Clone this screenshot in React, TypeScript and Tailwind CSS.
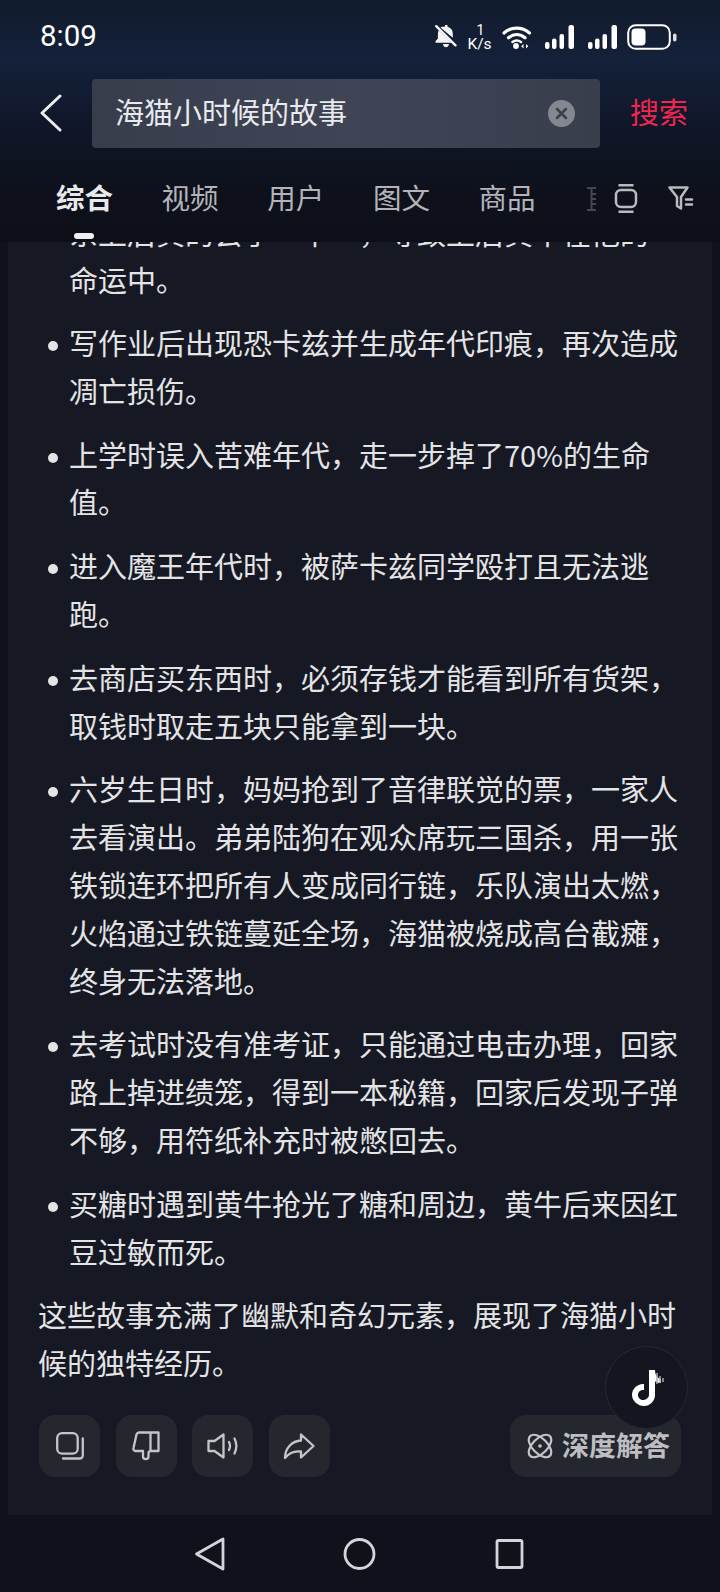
import { ReactNode } from "react";

const FONT = { fontFamily: '"Noto Sans CJK SC", Roboto, sans-serif' };

const BULLETS: string[][] = [
  ["写作业后出现恐卡兹并生成年代印痕，再次造成", "凋亡损伤。"],
  ["上学时误入苦难年代，走一步掉了70%的生命", "值。"],
  ["进入魔王年代时，被萨卡兹同学殴打且无法逃", "跑。"],
  ["去商店买东西时，必须存钱才能看到所有货架，", "取钱时取走五块只能拿到一块。"],
  [
    "六岁生日时，妈妈抢到了音律联觉的票，一家人",
    "去看演出。弟弟陆狗在观众席玩三国杀，用一张",
    "铁锁连环把所有人变成同行链，乐队演出太燃，",
    "火焰通过铁链蔓延全场，海猫被烧成高台截瘫，",
    "终身无法落地。",
  ],
  [
    "去考试时没有准考证，只能通过电击办理，回家",
    "路上掉进绩笼，得到一本秘籍，回家后发现子弹",
    "不够，用符纸补充时被憋回去。",
  ],
  ["买糖时遇到黄牛抢光了糖和周边，黄牛后来因红", "豆过敏而死。"],
];

const TABS = ["视频", "用户", "图文", "商品"];

function Line({ children }: { children: ReactNode }) {
  return <div className="h-[47.8px] whitespace-nowrap leading-[47.8px]">{children}</div>;
}

function ActionButton({ children }: { children: ReactNode }) {
  return (
    <div className="flex h-[62px] w-[61px] items-center justify-center rounded-[16px] bg-[#25272f]">
      {children}
    </div>
  );
}

function SignalBars() {
  return (
    <svg width="30" height="24" viewBox="0 0 30 24" fill="#fff">
      <rect x="0" y="17" width="4.500" height="7" rx="2" />
      <rect x="7" y="13.500" width="4.500" height="10.500" rx="2" />
      <rect x="14.500" y="9" width="4.500" height="15" rx="2" />
      <rect x="23.500" y="0" width="5.500" height="24" rx="2.200" />
    </svg>
  );
}

function StatusBar() {
  return (
    <div className="flex h-[72px] items-center justify-between pl-[40px] pr-[43px] pt-[1px]">
      <span className="text-[29.500px] leading-none text-white" style={{ fontFamily: "Roboto, sans-serif" }}>
        8:09
      </span>
      <div className="flex items-center text-white">
        <svg width="22" height="23" viewBox="0 0 22 23" fill="#f4f4f4" className="mr-[11px]">
          <path d="M10 0h2.500v1.800c3.400.7 5.300 3.400 5.300 7v4L5.500 2.600C6.500 2 8 1.800 10 1.600z" />
          <path d="M3.800 5.300 16.500 17.700H.5v-1.500l2.400-2.800V8.800c0-1.300.3-2.500.9-3.500zM8 19h6c-.2 2-1.500 3.300-3 3.300S8.200 21 8 19z" />
          <path d="M1.200 1.200 20.500 20.300" stroke="#f4f4f4" strokeWidth="2.400" strokeLinecap="round" />
        </svg>
        <div className="mr-[11px] flex w-[23px] flex-col items-center" style={{ fontFamily: "Roboto, sans-serif" }}>
          <span className="block h-[14px] pl-[2px] text-[14px] leading-[14px]">1</span>
          <span className="block h-[14px] text-[15.500px] leading-[14px]">K/s</span>
        </div>
        <svg width="30" height="24" viewBox="0 0 30 24" fill="none" stroke="#fff" strokeLinecap="round" className="mr-[13px]">
          <path d="M2 8C9 1.500 20 1.500 27.500 8" strokeWidth="3.200" />
          <path d="M6.500 12.800c5-4.400 11.500-4.400 16.500 0" strokeWidth="3.200" />
          <path d="M10.500 17c2.800-2 5.600-2 8.500 0" strokeWidth="2.600" />
          <circle cx="14" cy="21" r="2.900" fill="#fff" stroke="none" />
          <path d="M21.500 19v4.500l-2.300-2.200zM24 19v4.500l2.300-2.200z" fill="#fff" stroke="none" />
        </svg>
        <div className="mr-[13px] flex">
          <SignalBars />
        </div>
        <div className="mr-[9px] flex">
          <SignalBars />
        </div>
        <svg width="50" height="26" viewBox="0 0 50 26" fill="none">
          <rect x="1.200" y="1.200" width="41.600" height="23.600" rx="7.500" stroke="#fff" strokeWidth="2" />
          <rect x="4.500" y="4.500" width="14" height="17" rx="4" fill="#fff" />
          <rect x="46" y="9.500" width="3.500" height="8" rx="1.700" fill="#ddd" />
        </svg>
      </div>
    </div>
  );
}

function SearchBar() {
  return (
    <div className="flex h-[70px] items-center pr-[32px]">
      <div className="flex w-[92px] shrink-0 pl-[39px]">
        <svg width="24" height="38" viewBox="0 0 24 38" fill="none" stroke="#eceef1" strokeWidth="3" strokeLinecap="round" strokeLinejoin="round">
          <path d="M21 2 3 19l18 17" />
        </svg>
      </div>
      <div className="flex h-[69px] w-[508px] items-center justify-between rounded-[4px] bg-gradient-to-r from-[#373d4b] via-[#3f4555] to-[#393e4d] pl-[23px] pr-[25px]">
        <span className="pb-[3px] text-[29px] text-[#e8eaee]">海猫小时候的故事</span>
        <div className="flex h-[27px] w-[27px] items-center justify-center rounded-full bg-[#84878f]">
          <svg width="13" height="13" viewBox="0 0 13 13" stroke="#3a3f4c" strokeWidth="2.500" strokeLinecap="round">
            <path d="M2 2l9 9M11 2l-9 9" />
          </svg>
        </div>
      </div>
      <span className="ml-auto pb-[3px] text-[29px] text-[#f0264e]">搜索</span>
    </div>
  );
}

function Tabs() {
  return (
    <div className="relative flex h-[94px] items-center pl-[56px] pt-[5px]">
      <span className="w-[105.500px] text-[28.500px] font-bold text-[#e9e9eb]">综合</span>
      {TABS.map((t) => (
        <span key={t} className="w-[105.700px] text-[28.500px] text-[#b3b4ba]">
          {t}
        </span>
      ))}
      <div className="absolute left-[74px] top-[85px] h-[6px] w-[20px] rounded-full bg-[#f0f0f2]" />
      <svg width="10" height="24" viewBox="0 0 10 24" fill="none" stroke="#454750" strokeWidth="2" className="absolute left-[587px] top-[39px]">
        <path d="M0 1h9M4.500 1v22M0 23h9M5 7h4M5 12h4M5 17h4" />
      </svg>
      <svg width="24" height="29" viewBox="0 0 24 29" fill="none" stroke="#b9bbc0" strokeWidth="2.500" className="absolute left-[614px] top-[36px]">
        <path d="M4.500 1.300h15M4.500 27.700h15" />
        <rect x="2" y="6" width="20" height="17" rx="5" />
      </svg>
      <svg width="26" height="25" viewBox="0 0 26 25" fill="none" stroke="#b9bbc0" strokeWidth="2.500" strokeLinejoin="round" strokeLinecap="round" className="absolute left-[668px] top-[38px]">
        <path d="M1.500 1.500h18l-6.500 9.500v11.500l-4-2.500V11z" />
        <path d="M18 13.500h6M18 18.500h6" />
      </svg>
    </div>
  );
}

function ActionRow() {
  return (
    <div className="flex items-center justify-between px-[31px]">
      <div className="flex gap-[15.500px]">
        <ActionButton>
          <svg width="28" height="28" viewBox="0 0 28 28" fill="none" stroke="#c4c5c9" strokeWidth="2.300" strokeLinecap="round" strokeLinejoin="round">
            <rect x="1.200" y="1.200" width="20.500" height="20.500" rx="5" />
            <path d="M26.800 6.500V23.500a3 3 0 0 1-3 3H7" />
          </svg>
        </ActionButton>
        <ActionButton>
          <svg width="28" height="30" viewBox="0 0 28 30" fill="none" stroke="#c4c5c9" strokeWidth="2.300" strokeLinecap="round" strokeLinejoin="round">
            <path d="M7 1.500h19.500V20h-7.500c-1.500 0-2.500 1-2.500 2.500v3c0 3.500-5.500 3.500-5.500 0V20H3.500c-1.500 0-2.500-1.500-2-3L4.500 3.500C5 2.200 5.800 1.500 7 1.500zM18.500 1.500V20" />
          </svg>
        </ActionButton>
        <ActionButton>
          <svg width="32" height="26" viewBox="0 0 32 26" fill="none" stroke="#c4c5c9" strokeWidth="2.300" strokeLinecap="round" strokeLinejoin="round">
            <path d="M1.500 8h6l9-6.500v23l-9-6.500h-6z" />
            <path d="M22 9c1.300 2.600 1.300 5.400 0 8M27.500 5.500c2.400 4.800 2.400 10.200 0 15" />
          </svg>
        </ActionButton>
        <ActionButton>
          <svg width="32" height="26" viewBox="0 0 32 26" fill="none" stroke="#c4c5c9" strokeWidth="2.300" strokeLinecap="round" strokeLinejoin="round">
            <path d="M18 1.500 30.500 13 18 24.500v-6C11 17.500 6 20 2 25 2 15 9 8 18 7.500z" />
          </svg>
        </ActionButton>
      </div>
      <div className="flex h-[62px] w-[171px] items-center gap-[9px] rounded-[16px] bg-[#25272f] pl-[17px]">
        <svg width="26" height="26" viewBox="0 0 26 26" fill="none" stroke="#c4c5c9" strokeWidth="2.200" className="shrink-0">
          <ellipse cx="13" cy="13" rx="7.500" ry="14" transform="rotate(45 13 13)" />
          <ellipse cx="13" cy="13" rx="7.500" ry="14" transform="rotate(-45 13 13)" />
          <circle cx="13" cy="13" r="1.800" fill="#c4c5c9" stroke="none" />
        </svg>
        <span className="pb-[2px] text-[27px] font-bold text-[#bdbec2]">深度解答</span>
      </div>
    </div>
  );
}

export default function App() {
  return (
    <div className="relative flex h-[1592px] w-[720px] flex-col overflow-hidden bg-[#10121b]" style={FONT}>
      <header className="h-[242px] shrink-0 bg-[linear-gradient(180deg,#121b2c_0%,#14213a_25%,#10172a_50%,#0e111b_80%,#0d0f18_100%)]">
        <StatusBar />
        <div className="h-[6px]" />
        <SearchBar />
        <Tabs />
      </header>

      <main className="relative mx-[8px] h-[1273px] overflow-hidden bg-[#161923] text-[29px] text-[#e4e4e6]">
        <div className="-mt-[33.500px] pl-[61px]">
          <Line>系上后真的会了一下一，导致上后真不在他的</Line>
          <Line>命运中。</Line>
        </div>
        <ul className="mt-[15px]">
          {BULLETS.map((lines) => (
            <li key={lines[0]} className="relative mb-[16px] pl-[61px]">
              <span className="absolute left-[40px] top-[22px] h-[10px] w-[10px] rounded-full bg-[#e4e4e6]" />
              {lines.map((l) => (
                <Line key={l}>{l}</Line>
              ))}
            </li>
          ))}
        </ul>
        <div className="pl-[30px]">
          <Line>这些故事充满了幽默和奇幻元素，展现了海猫小时</Line>
          <Line>候的独特经历。</Line>
        </div>
        <div className="mt-[28px]">
          <ActionRow />
        </div>
      </main>

      <nav className="flex flex-1 items-center justify-center pt-[1px]">
        <svg width="360" height="36" viewBox="0 0 360 36" fill="none" stroke="#d4d5d8" strokeWidth="2.800" strokeLinejoin="round">
          <path d="M43 3v30L16.500 18z" />
          <ellipse cx="179.500" cy="18" rx="14.500" ry="14.500" />
          <rect x="317" y="4.500" width="25" height="27" rx="1.500" />
        </svg>
      </nav>

      <div className="absolute left-[605px] top-[1346px] flex h-[83px] w-[83px] items-center justify-center rounded-full border border-[#262832] bg-[#14161f]">
        <svg width="36" height="40" viewBox="0 0 36 40" fill="none">
          <path d="M20 2h6c0 5 2.500 8 6 9v4c-2.500 0-4.500-.6-6-1.800V27c0 6-5 11-11 11S3 33 3 27s5-11 11-11h1v6h-1c-2.800 0-5 2.200-5 5s2.200 5 5 5 6-2.200 6-5z" fill="#fff" />
          <path d="M28 5v11M31 8v7M34 10v4" stroke="#aaa" strokeWidth="1.500" />
        </svg>
      </div>
    </div>
  );
}
